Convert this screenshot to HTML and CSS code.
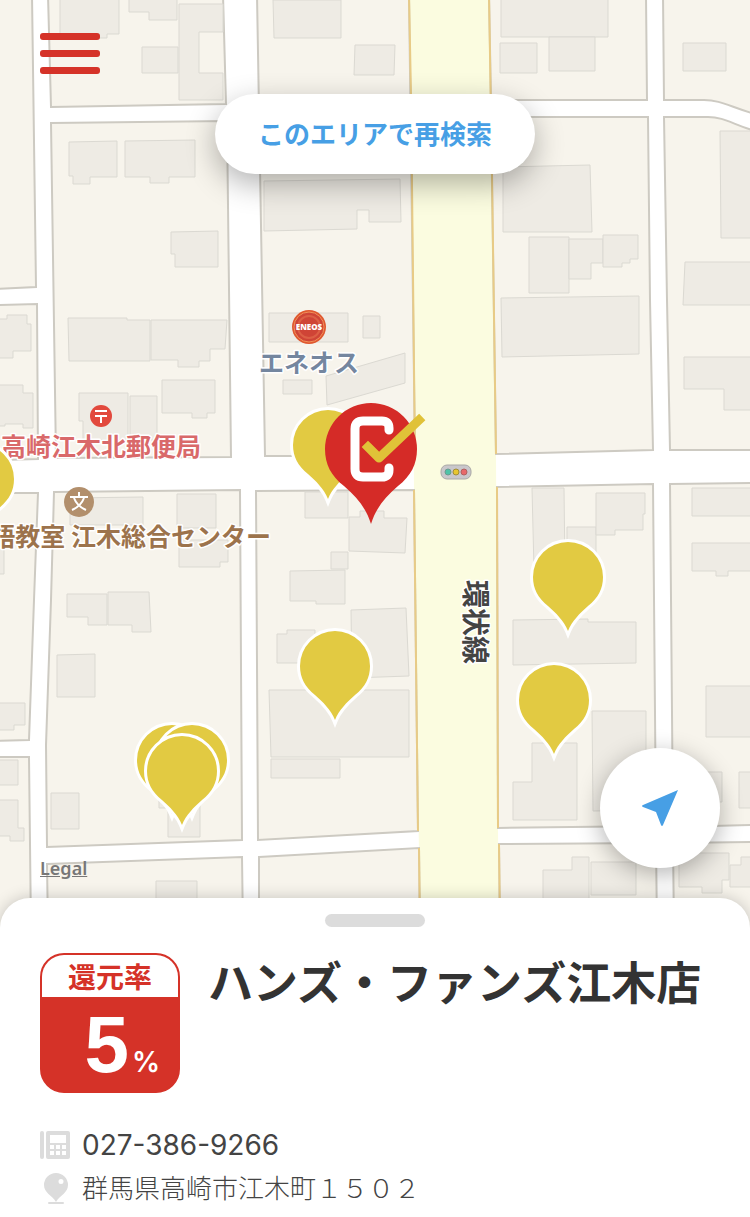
FILE: index.html
```
<!DOCTYPE html>
<html lang="ja">
<head>
  <meta charset="UTF-8">
  <meta name="viewport" content="width=device-width, initial-scale=1.0">
  <title>ハンズ・ファンズ江木店</title>
  <link rel="stylesheet" href="styles.css">
</head>
<body>

  <main class="map">
    <svg class="map-canvas" viewBox="0 0 750 928" preserveAspectRatio="xMidYMin slice">
      <defs>
        <path id="pin" d="M0 54C-4 44 -12 36 -20 29C-30 21 -35 12 -35 0A35 35 0 0 1 35 0C35 12 30 21 20 29C12 36 4 44 0 54Z"/>
      </defs>

      <!-- 環状線 -->
      <path class="main-road" d="M409 -5H489L492 175L496 453L498 828L499 930H420L414 490L411 94Z"/>

      <!-- 街区 -->
      <g class="block">
        <path d="M-5 -5H32L36 287L-5 289Z"/>
        <path d="M48 -5H223L226 104L51 107Z"/>
        <path d="M51 123L227 121L231 457L56 458Z"/>
        <path d="M-5 305L37 304L38 459L-5 460Z"/>
        <path d="M-5 493H38L34 600L29 740L-5 741Z"/>
        <path d="M54 492L240 490L242 840L47 847L46 745L51 600Z"/>
        <path d="M-5 757H29L31 930H-5Z"/>
        <path d="M47 864L242 857L243 930H48Z"/>
        <path d="M257 -5H409L415 456H265Z"/>
        <path d="M256 491L414 490L418 831L258 840Z"/>
        <path d="M259 857L419 848L420 930H259Z"/>
        <path d="M489 -5H646L647 100H491Z"/>
        <path d="M491 117H648L650 300L653 450L496 454Z"/>
        <path d="M663 -5L664 100H704C721 100 730 107 755 114V-5Z"/>
        <path d="M664 117H708C724 117 732 124 755 131V450H670L667 300Z"/>
        <path d="M497 487L653 484L656 826L498 828Z"/>
        <path d="M670 484L755 483V825L673 827Z"/>
        <path d="M499 844L656 843L657 930H500Z"/>
        <path d="M673 843L755 842V930H674Z"/>
      </g>
      <g class="road-edge">
        <path d="M409 -5L411 94L415 456"/>
        <path d="M414 490L418 831"/>
        <path d="M419 848L420 930"/>
        <path d="M489 -5L492 175L496 454"/>
        <path d="M497 487L498 828"/>
        <path d="M499 844L500 930"/>
      </g>

      <!-- 建物 -->
      <g class="building">
        <path d="M60 -5H119V34H107V38H60Z"/>
        <path d="M129 -5H177V20H149V12H129Z"/>
        <path d="M142 47H178V73H142Z"/>
        <path d="M179 4H223V32H199V73H223V100H179Z"/>
        <path d="M69 142L117 141V177H90V184H73V176H69Z"/>
        <path d="M125 141L195 140V177H169V183H150V177H125Z"/>
        <path d="M171 232L218 231V267H175V254H171Z"/>
        <path d="M68 318H127V320H150V361H69Z"/>
        <path d="M151 320H227L225 349H210V361H199V367H178V360H151Z"/>
        <path d="M162 380H215V413H207V418H192V413H162Z"/>
        <path d="M79 393H128V440H83V421H79Z"/>
        <path d="M130 396H157V440H130Z"/>
        <path d="M-5 319H7V315H27V324H31V351H13V358H-5Z"/>
        <path d="M-5 385H23V393H33V428H23V424H5V426H-5Z"/>
        <path d="M70 498L143 497V525H70Z"/>
        <path d="M177 494H216V528H177Z"/>
        <path d="M179 540H228V562H220V567H179Z"/>
        <path d="M-5 545H4V574H-5Z"/>
        <path d="M67 594H107V625H88V617H67Z"/>
        <path d="M108 592H149L151 632H132V625H108Z"/>
        <path d="M57 655L95 654V697H57Z"/>
        <path d="M-5 703H25V725H14V730H-5Z"/>
        <path d="M-5 760H18V785H-5Z"/>
        <path d="M-5 800H18V828H24V841H10V836H-5Z"/>
        <path d="M51 793H79V829H51Z"/>
        <path d="M159 790H200V837H168V808H159Z"/>
        <path d="M156 881H197V930H156Z"/>
        <path d="M273 0H341V38H274Z"/>
        <path d="M355 45H395L394 75H354Z"/>
        <path d="M264 181L400 179L401 222H369V210H357V229L264 231Z"/>
        <path d="M269 313H348V342H269Z"/>
        <path d="M363 316H380V338H363Z"/>
        <path d="M326 376L405 353V383L327 405Z"/>
        <path d="M283 380H312V394H283Z"/>
        <path d="M305 492H348V518H305Z"/>
        <path d="M349 517H360V511H384V518H407L405 553L349 551Z"/>
        <path d="M331 552H348V569H331Z"/>
        <path d="M290 571L345 570V604H316V601H290Z"/>
        <path d="M351 610L406 608L409 676L352 678Z"/>
        <path d="M277 634H287V630H315V663H277Z"/>
        <path d="M269 690H409V757H271Z"/>
        <path d="M271 759H340V778H271Z"/>
        <path d="M501 -5H608V37H501Z"/>
        <path d="M500 43H537V73H500Z"/>
        <path d="M549 37H595V71H549Z"/>
        <path d="M503 167L590 165L592 232H503Z"/>
        <path d="M529 237H569V293H529Z"/>
        <path d="M569 239H603V263H591V279H569Z"/>
        <path d="M603 235H638V259H630V263H622V267H603Z"/>
        <path d="M501 298L639 296V354L502 357Z"/>
        <path d="M683 43H726V71H683Z"/>
        <path d="M720 131H755V238H721Z"/>
        <path d="M685 262H755V305H683Z"/>
        <path d="M684 357H755V410H724V389H684Z"/>
        <path d="M532 488H564L565 570H534Z"/>
        <path d="M567 527H596V570H567Z"/>
        <path d="M596 493H645V514H643V530H615V535H596Z"/>
        <path d="M692 488H755V516H692Z"/>
        <path d="M692 543H755V571H728V576H716V571H692Z"/>
        <path d="M513 620L588 619V622H636V663L513 665Z"/>
        <path d="M592 711H646V810L593 811Z"/>
        <path d="M532 743H577V820H513V782H532Z"/>
        <path d="M706 686H755V737H706Z"/>
        <path d="M704 772H722V802H704Z"/>
        <path d="M739 772H755V808H739Z"/>
        <path d="M543 870H572V857H589V930H543Z"/>
        <path d="M591 862H636V895H591Z"/>
        <path d="M679 853H729V880H722V893H702V887H679Z"/>
        <path d="M730 865H741V857H755V887H730Z"/>
      </g>

      <!-- 地図上のラベル -->
      <g class="label">
        <text class="label-shop" x="259" y="372">エネオス</text>
        <text class="label-post" x="1" y="456">高崎江木北郵便局</text>
        <text class="label-school" x="271" y="546" text-anchor="end">語教室 江木総合センター</text>
        <text class="label-road" transform="translate(465 580) rotate(90)">環状線</text>
      </g>

      <!-- エネオス -->
      <g>
        <circle cx="309" cy="327" r="17" fill="#e0582f"/>
        <circle cx="309" cy="327" r="15" fill="#cf4436" stroke="#f0915a" stroke-width="1"/>
        <circle cx="309" cy="327" r="11" fill="none" stroke="#dc5f45" stroke-width="2"/>
        <text class="eneos" x="309" y="330" text-anchor="middle">ENEOS</text>
      </g>
      <!-- 郵便局 -->
      <g>
        <circle cx="101" cy="416" r="11" fill="#e2493d"/>
        <path d="M95 411H107M95 416H107M101 416V423" fill="none" stroke="#fff" stroke-width="2"/>
      </g>
      <!-- 教室 -->
      <g>
        <circle cx="79" cy="502" r="15" fill="#b28f6c"/>
        <path d="M79 492V497M70 497H88M74 498Q77 506 86 510M84 498Q81 506 72 510" fill="none" stroke="#fff" stroke-width="2"/>
      </g>
      <!-- 信号 -->
      <g>
        <rect x="441" y="465" width="30" height="14" rx="6" fill="#c9c7cb" stroke="#aaa9a6"/>
        <circle cx="448" cy="472" r="3" fill="#4fc3a8" stroke="#6e9a90"/>
        <circle cx="456" cy="472" r="3" fill="#e8c62e" stroke="#a08c3a"/>
        <circle cx="464" cy="472" r="3" fill="#e8686a" stroke="#b06060"/>
      </g>

      <!-- 店舗ピン -->
      <g class="pin">
        <use href="#pin" x="-21" y="479"/>
        <use href="#pin" x="328" y="445"/>
        <use href="#pin" x="568" y="577"/>
        <use href="#pin" x="335" y="666"/>
        <use href="#pin" x="554" y="700"/>
        <use href="#pin" x="172" y="760"/>
        <use href="#pin" x="192" y="760"/>
        <use href="#pin" x="182" y="771"/>
      </g>
      <!-- 選択中のピン -->
      <g>
        <path fill="#d52b27" d="M371 524C366 508 357 497 344 486C331 476 325 464 325 449A46 46 0 0 1 417 449C417 464 411 476 398 486C385 497 376 508 371 524Z"/>
        <path fill="none" stroke="#fff" stroke-width="9" stroke-linecap="round" d="M389 430V428Q389 421 382 421H363Q355 421 355 429V469Q355 477 363 477H382Q389 477 389 470V468"/>
        <path fill="none" stroke="#e0c238" stroke-width="9" stroke-linecap="square" stroke-linejoin="round" d="M368 447L379 458L419 420"/>
      </g>
    </svg>

    <button class="menu-button" type="button" aria-label="メニュー">
      <span></span>
      <span></span>
      <span></span>
    </button>
    <button class="search-button" type="button">このエリアで再検索</button>
    <button class="locate-button" type="button" aria-label="現在地">
      <svg width="36" height="36" viewBox="0 0 36 36">
        <path fill="#479fe5" d="M36 0L21 35Q20 37 19 35L14 22L1 17Q-1 16 1 15Z"/>
      </svg>
    </button>
    <a class="legal" href="#">Legal</a>
  </main>

  <section class="sheet">
    <div class="handle"></div>
    <div class="shop">
      <div class="rate">
        <div class="rate-title">還元率</div>
        <div class="rate-value"><b>5</b><span>%</span></div>
      </div>
      <h1>ハンズ・ファンズ江木店</h1>
    </div>
    <ul class="info">
      <li>
        <svg width="30" height="30" viewBox="0 0 30 30" fill="#dcdcdc">
          <rect x="0" y="1" width="4" height="28" rx="2"/>
          <path fill-rule="evenodd" d="M8 1H28Q30 1 30 3V27Q30 29 28 29H8Q6 29 6 27V3Q6 1 8 1ZM10 5V13H26V5ZM10 15V19H14V15ZM16 15V19H20V15ZM22 15V19H26V15ZM10 21V25H14V21ZM16 21V25H20V21ZM22 21V25H26V21Z"/>
        </svg>
        <a class="tel" href="tel:027-386-9266">027-386-9266</a>
      </li>
      <li>
        <svg width="30" height="32" viewBox="0 0 30 32" fill="#dcdcdc">
          <path fill-rule="evenodd" d="M16 0A12 12 0 0 1 28 12C28 20 20 22 16 29C12 22 4 20 4 12A12 12 0 0 1 16 0ZM21 6A2 2 0 1 0 21 11A2 2 0 1 0 21 6Z"/>
          <rect x="8" y="29" width="16" height="2" rx="1"/>
        </svg>
        <span class="address">群馬県高崎市江木町１５０２</span>
      </li>
    </ul>
  </section>

</body>
</html>
```
FILE: styles.css
```
* {
  box-sizing: border-box;
}
body {
  margin: 0;
  min-height: 100vh;
  display: flex;
  flex-direction: column;
  font-family: "Noto Sans CJK JP", sans-serif;
  color: #333;
  background-color: #fff;
}
button {
  border: none;
  padding: 0;
  background-color: #fff;
  font-family: inherit;
  cursor: pointer;
}

/* map */
.map {
  position: relative;
  flex: 1;
  min-height: 480px;
  overflow: hidden;
}
.map-canvas {
  position: absolute;
  top: 0;
  left: 0;
  width: 100%;
  height: 100%;
}
.main-road {
  fill: #fbfce0;
}
.block {
  fill: #f7f4ec;
  stroke: #cdcac2;
  stroke-width: 2;
}
.road-edge {
  fill: none;
  stroke: #e8cb86;
  stroke-width: 2;
}
.building {
  fill: #eeebe4;
  stroke: #dbd9d2;
  stroke-width: 1;
}
.label {
  font-size: 25px;
  font-weight: 700;
  stroke: #fff;
  stroke-width: 3px;
  stroke-linejoin: round;
  paint-order: stroke;
}
.label-shop {
  fill: #74869f;
}
.label-post {
  fill: #d9696a;
}
.label-school {
  fill: #9c734c;
}
.label-road {
  font-size: 28px;
  fill: #444;
}
.eneos {
  font-family: "Open Sans", sans-serif;
  font-size: 8px;
  font-weight: 800;
  fill: #fff;
}
.pin {
  fill: #e2ca42;
  stroke: #fff;
  stroke-width: 6px;
  paint-order: stroke;
}

/* controls over the map */
.menu-button {
  position: absolute;
  top: 33px;
  left: 40px;
  width: 60px;
  display: flex;
  flex-direction: column;
  gap: 10px;
  background-color: transparent;
}
.menu-button span {
  height: 7px;
  border-radius: 3px;
  background-color: #d53228;
}
.search-button {
  position: absolute;
  top: 94px;
  left: 0;
  right: 0;
  width: 320px;
  height: 80px;
  margin: 0 auto;
  padding-bottom: 4px;
  border-radius: 40px;
  color: #479fe5;
  font-size: 26px;
  font-weight: 700;
  box-shadow: 0 10px 30px rgba(0, 0, 0, 0.3);
}
.locate-button {
  position: absolute;
  right: 30px;
  bottom: 60px;
  width: 120px;
  height: 120px;
  border-radius: 50%;
  display: flex;
  align-items: center;
  justify-content: center;
  box-shadow: 0 6px 24px rgba(0, 0, 0, 0.3);
}
.legal {
  position: absolute;
  left: 40px;
  bottom: 48px;
  color: #777;
  font-family: "Noto Sans", sans-serif;
  font-size: 18px;
  font-weight: 600;
  line-height: 24px;
}

/* bottom sheet */
.sheet {
  position: relative;
  margin-top: -30px;
  padding: 16px 40px 6px;
  border-radius: 30px 30px 0 0;
  background-color: #fff;
  box-shadow: 0 0 16px rgba(0, 0, 0, 0.2);
}
.handle {
  width: 100px;
  height: 13px;
  margin: 0 auto 26px;
  border-radius: 7px;
  background-color: #dcdcdc;
}
.shop {
  display: flex;
  gap: 28px;
}
.rate {
  flex: none;
  width: 140px;
  height: 140px;
  border: 2px solid #d53228;
  border-radius: 24px;
  overflow: hidden;
  background-color: #d53228;
  display: flex;
  flex-direction: column;
}
.rate-title {
  height: 42px;
  background-color: #fff;
  color: #d53228;
  font-size: 28px;
  font-weight: 700;
  line-height: 42px;
  text-align: center;
}
.rate-value {
  flex: 1;
  display: flex;
  justify-content: flex-end;
  align-items: baseline;
  gap: 3px;
  padding-right: 18px;
  color: #fff;
  font-family: "Liberation Sans", sans-serif;
  line-height: 96px;
}
.rate-value b {
  font-size: 80px;
}
.rate-value span {
  font-family: Inter, sans-serif;
  font-size: 28px;
  font-weight: 600;
}
h1 {
  margin: 0 -30px 0 0;
  font-size: 45px;
  font-weight: 700;
  line-height: 56px;
}
.info {
  list-style: none;
  margin: 30px 0 0;
  padding: 0;
}
.info li {
  display: flex;
  align-items: center;
  gap: 12px;
  min-height: 44px;
  color: #444;
}
.tel {
  color: #444;
  font-family: Inter, sans-serif;
  font-size: 28px;
  text-decoration: none;
}
.address {
  padding-bottom: 4px;
  font-size: 26px;
  font-weight: 300;
  line-height: 40px;
}
```
